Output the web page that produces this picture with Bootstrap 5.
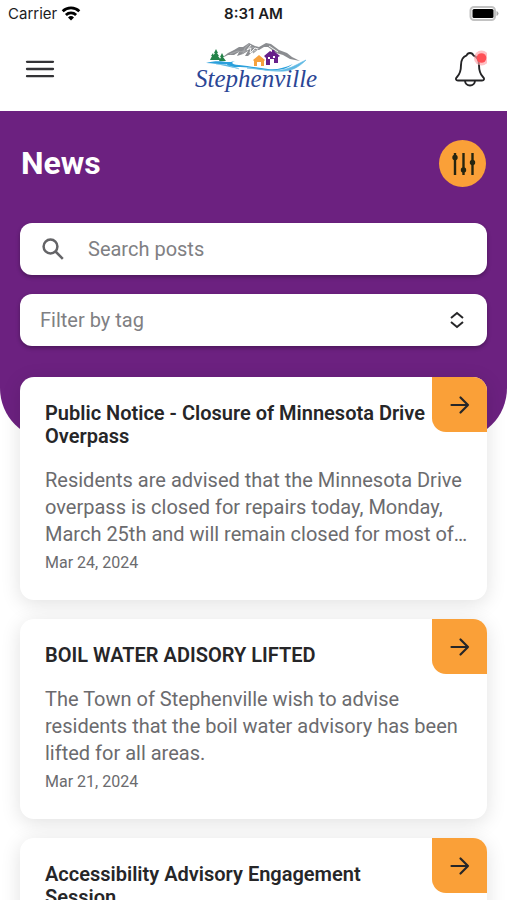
<!DOCTYPE html>
<html lang="en">
<head>
<meta charset="utf-8">
<meta name="viewport" content="width=device-width, initial-scale=1">
<title>Stephenville News</title>
<link href="https://cdn.jsdelivr.net/npm/bootstrap@5.3.0/dist/css/bootstrap.min.css" rel="stylesheet">
<style>
  body { font-family: Roboto, "Liberation Sans", sans-serif; color: #262628; background: #fff; }
  .status-bar { font: 15px/28px Inter, "Liberation Sans", sans-serif; color: #1c1c1e; padding: 0 8px; }
  .status-side { flex: 1 1 0; }
  .status-time { font-weight: 600; }
  .app-header { height: 83px; padding: 0 20px 2px; }
  .icon-btn { width: 40px; height: 44px; }
  .content-area { overflow-y: auto; scrollbar-width: none; }
  .hero { background: #6c2180; border-radius: 0 0 52px 52px; padding: 28px 20px 94px; }
  .hero-head { padding: 0 1px; }
  .hero-title { font-size: 32px; line-height: 49px; font-weight: 700; }
  .options-btn { width: 47px; height: 47px; background: #faa038; }
  .field-box { height: 52px; border-radius: 12px; background: #fff; box-shadow: 0 2px 4px rgba(0,0,0,.3); }
  .field-box .form-control, .field-box .form-select { font-size: 20px; color: #808083; background-color: transparent; }
  .field-box .form-control::placeholder { color: #808083; opacity: 1; }
  .field-box .form-select { background-image: none; padding: 0 20px; }
  .search-box { margin-top: 35px; padding: 0 20px; gap: 11px; }
  .tag-box { margin-top: 19px; padding-right: 22px; }
  .news-list { margin-top: -63px; padding: 0 20px 20px; gap: 19px; }
  .news-card { border-radius: 14px; padding: 25px 18px 23px 25px; box-shadow: 0 4px 20px rgba(0,0,0,.12); }
  .news-title { font-size: 20px; line-height: 23px; font-weight: 600; margin: 0 36px 19px 0; }
  .news-text { font-size: 20px; line-height: 27px; color: #6b6b6e; margin: 0; }
  .news-date { font-size: 16px; line-height: 29px; color: #6b6b6e; }
  .open-link { width: 55px; height: 55px; background: #faa038; border-radius: 0 14px 0 14px; color: #262628; }
  .logo-text { font: italic 25px "Liberation Serif", serif; fill: #2b4695; }
</style>
</head>
<body>
<div class="vh-100 d-flex flex-column overflow-hidden">
  <div class="status-bar d-flex align-items-center flex-shrink-0">
    <div class="status-side d-flex align-items-center gap-1">
      <span>Carrier</span>
      <svg width="20" height="16" viewBox="0 0 20 16" fill="none" stroke="#000" stroke-width="2.8" aria-hidden="true">
        <path d="M1.700 5.200a12 12 0 0 1 16.600 0M4.900 8.900a7.400 7.400 0 0 1 10.200 0"/>
        <path d="M10 14.500l-3-3a4.300 4.300 0 0 1 6 0z" fill="#000" stroke="none"/>
      </svg>
    </div>
    <span class="status-time">8:31 AM</span>
    <div class="status-side d-flex justify-content-end">
      <svg width="30" height="16" viewBox="0 0 30 16" aria-hidden="true">
        <rect x="1.500" y="1" width="24.500" height="13" rx="3.500" fill="#fff" stroke="#c2c2c2" stroke-width="2"/>
        <rect x="3.500" y="3" width="21" height="9" rx="1.500" fill="#000"/>
        <path d="M27.500 5q2 .8 2 2.500t-2 2.500z" fill="#aaa"/>
      </svg>
    </div>
  </div>

  <header class="app-header d-flex align-items-center justify-content-between flex-shrink-0">
    <button class="icon-btn btn p-0 border-0 d-flex align-items-center justify-content-center" type="button" aria-label="Menu">
      <svg width="30" height="20" viewBox="0 0 30 20" stroke="#333336" stroke-width="2.300" stroke-linecap="round"><path d="M2 2.800h26M2 10h26M2 17.200h26"/></svg>
    </button>
    <a href="#" aria-label="Stephenville home">
      <svg class="d-block" width="130" height="64" viewBox="0 0 130 64">
        <path d="M34 20l5-4 6-3 5-3 4 0 6-4 6 3 4 1 7-4 5 1 8 6 8 3 5 4 8 4-10-2-7-4-7-2-8-6-4 0-5 3-5 0-6 6-3 0 3-5-5 3-6 2 2-4-5 3-6 0-4 2z" fill="#8b8d91"/>
        <path d="M60 7l-4 4-2 5 8-6 4 1-2 5 6-5M41 17l8-3 3 1 4-2" fill="none" stroke="#a5a7aa" stroke-width="1.100"/>
        <path d="M62 8l-4 5 4-2-1 5 5-5 3 1M80 9l9 6" fill="none" stroke="#fff" stroke-width=".9"/>
        <path d="M27 12l-2 4h1l-2 3h1l-3 4h10l-3-4h1l-2-3h1zM24 16l-2 3h1l-2 4h5zM33 16l-2 4h1l-2 4h7l-3-4h1z" fill="#258349"/>
        <path d="M17 26c6-2 16-2 20-1 4 0 6 0 9-1-5 2-3 3 4 4 9 1 20 3 29 4 8 1 17-1 25-5-6 5-14 7-24 6-10 0-19-3-29-3-8 0-13 0-13-3-6 1-13-1-21-1z" fill="#2aa0dc"/>
        <path d="M27 27c6 1 11 0 14 2s7 1 9 3M58 31c12 0 26 5 39 1 8-2 15-7 20-9-6 6-12 10-21 11-14 1-23-2-38-3z" fill="#5fb9e4" stroke="#5fb9e4" stroke-width=".6"/>
        <path d="M64 23l6-5 6 5-1 1v5h-3v-4h-4v4h-3v-5z" fill="#f6a13e"/>
        <path d="M75 19l6-5 2 1v-2h2l1 2 5 4-2 1v6h-4v-4h-4v6h-4v-7z" fill="#67208a"/>
        <path d="M79 20h2v2h-2zM84 19h2v2h-2z" fill="#fff"/>
        <text class="logo-text" x="6" y="50">Stephenville</text>
      </svg>
    </a>
    <button class="icon-btn btn p-0 border-0 d-flex align-items-center justify-content-center" type="button" aria-label="Notifications, new">
      <svg width="40" height="44" viewBox="0 0 40 44" fill="none" stroke="#242426" stroke-width="1.900" stroke-linejoin="round">
        <path d="M23 6q2.500 0 3.300 2.300C31 10 32 13 32 18c0 6 1 9 4 12 2 2 1 3.500-1 3.500H11c-2 0-3-1.500-1-3.500 3-3 4-6 4-12 0-5 1-8 5.700-9.700Q20.500 6 23 6z"/>
        <path d="M18 33.500a5 5 0 0 0 10 0"/>
        <g stroke="none"><circle cx="34.500" cy="11" r="7.500" fill="#ff9fa6" opacity=".65"/><circle cx="34.500" cy="11" r="4.800" fill="#ff4f55"/></g>
      </svg>
    </button>
  </header>

  <main class="content-area flex-grow-1">
    <section class="hero">
      <div class="hero-head d-flex align-items-center justify-content-between">
        <h1 class="hero-title text-white m-0">News</h1>
        <button class="options-btn btn rounded-circle p-0 border-0 d-flex align-items-center justify-content-center" type="button" aria-label="Filter options">
          <svg width="26" height="26" viewBox="0 0 26 26" stroke="#252510" stroke-width="2.400" fill="#252510" aria-hidden="true"><path d="M5 2v22M13.500 2v22M22.500 2v22"/><circle cx="5" cy="6.500" r="1.500"/><circle cx="13.500" cy="19" r="1.500"/><circle cx="22.500" cy="11.500" r="1.500"/></svg>
        </button>
      </div>
      <div class="field-box search-box d-flex align-items-center">
        <svg class="flex-shrink-0" width="25" height="24" viewBox="-1 0 25 24" fill="none" stroke="#646467" stroke-width="2.500" aria-hidden="true"><circle cx="9.500" cy="9.500" r="6.900"/><path d="M14.500 14.500l7.300 7.300"/></svg>
        <input class="form-control border-0 shadow-none h-100 py-0" type="search" placeholder="Search posts" aria-label="Search posts">
      </div>
      <div class="field-box tag-box d-flex align-items-center">
        <select class="form-select border-0 shadow-none h-100" aria-label="Filter by tag"><option>Filter by tag</option></select>
        <svg class="flex-shrink-0" width="16" height="18" viewBox="0 0 16 18" fill="none" stroke="#262628" stroke-width="2" aria-hidden="true"><path d="M2 7l6-5 6 5M2 11l6 5 6-5"/></svg>
      </div>
    </section>

    <section class="news-list d-flex flex-column position-relative" aria-label="News posts">
      <article class="news-card card border-0">
        <h2 class="news-title">Public Notice - Closure of Minnesota Drive Overpass</h2>
        <p class="news-text">Residents are advised that the Minnesota Drive overpass is closed for repairs today, Monday, March 25th and will remain closed for most of…</p>
        <time class="news-date" datetime="2024-03-24">Mar 24, 2024</time>
        <a class="open-link position-absolute top-0 end-0 d-flex align-items-center justify-content-center" href="#" aria-label="Open post"><svg width="20" height="20" viewBox="0 0 20 20" fill="none" stroke="currentColor" stroke-width="2.200" stroke-linecap="round" stroke-linejoin="round"><path d="M1.500 10h16.500M10.500 2.500L18 10l-7.500 7.500"/></svg></a>
      </article>
      <article class="news-card card border-0">
        <h2 class="news-title">BOIL WATER ADISORY LIFTED</h2>
        <p class="news-text">The Town of Stephenville wish to advise residents that the boil water advisory has been lifted for all areas.</p>
        <time class="news-date" datetime="2024-03-21">Mar 21, 2024</time>
        <a class="open-link position-absolute top-0 end-0 d-flex align-items-center justify-content-center" href="#" aria-label="Open post"><svg width="20" height="20" viewBox="0 0 20 20" fill="none" stroke="currentColor" stroke-width="2.200" stroke-linecap="round" stroke-linejoin="round"><path d="M1.500 10h16.500M10.500 2.500L18 10l-7.500 7.500"/></svg></a>
      </article>
      <article class="news-card card border-0">
        <h2 class="news-title">Accessibility Advisory Engagement Session</h2>
        <a class="open-link position-absolute top-0 end-0 d-flex align-items-center justify-content-center" href="#" aria-label="Open post"><svg width="20" height="20" viewBox="0 0 20 20" fill="none" stroke="currentColor" stroke-width="2.200" stroke-linecap="round" stroke-linejoin="round"><path d="M1.500 10h16.500M10.500 2.500L18 10l-7.500 7.500"/></svg></a>
      </article>
    </section>
  </main>
</div>
<script src="https://cdn.jsdelivr.net/npm/bootstrap@5.3.0/dist/js/bootstrap.bundle.min.js"></script>
</body>
</html>
